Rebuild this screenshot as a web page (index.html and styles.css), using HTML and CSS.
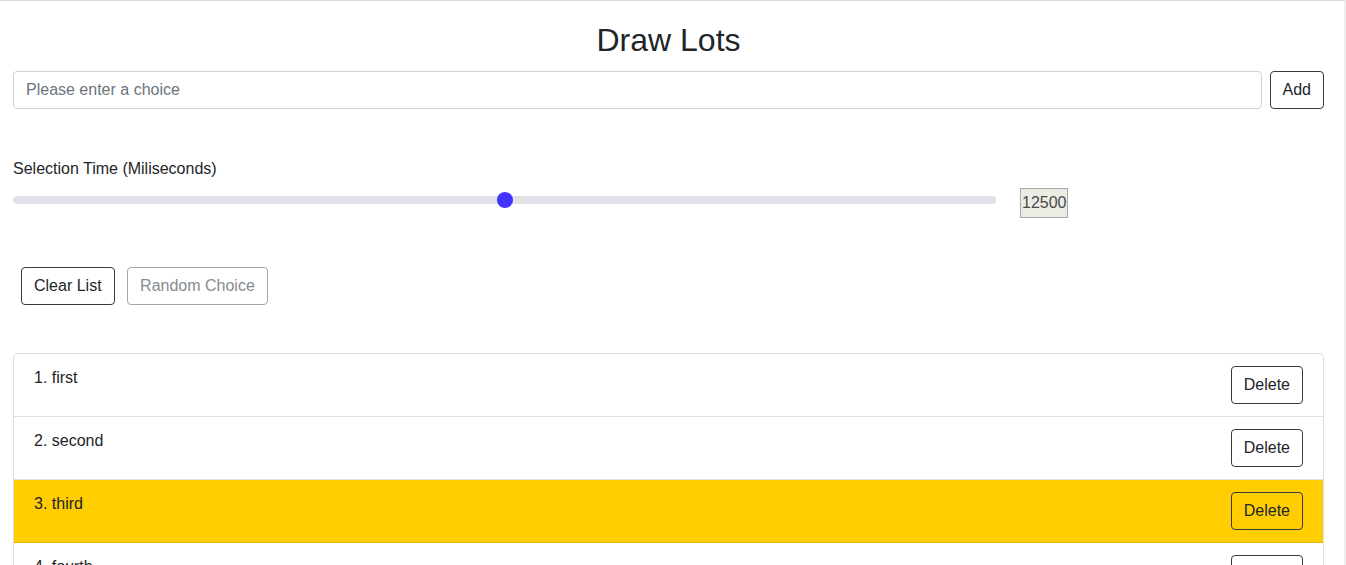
FILE: index.html
```html
<!DOCTYPE html>
<html lang="en">
<head>
<meta charset="utf-8">
<title>Draw Lots</title>
<link rel="stylesheet" href="styles.css">
</head>
<body>
<div class="frame">
  <main class="app">
    <h1 class="title">Draw Lots</h1>
    <div class="add-row">
      <input class="choice-input" type="text" placeholder="Please enter a choice">
      <button class="btn">Add</button>
    </div>

    <label class="time-label">Selection Time (Miliseconds)</label>
    <div class="slider-row">
      <input class="range" type="range" min="0" max="25000" value="12500">
      <span class="range-value">12500</span>
    </div>

    <div class="actions">
      <button class="btn">Clear List</button>
      <button class="btn btn-disabled" disabled>Random Choice</button>
    </div>

    <ul class="list">
      <li class="item"><span class="item-text">1. first</span><button class="btn">Delete</button></li>
      <li class="item"><span class="item-text">2. second</span><button class="btn">Delete</button></li>
      <li class="item item-selected"><span class="item-text">3. third</span><button class="btn">Delete</button></li>
      <li class="item"><span class="item-text">4. fourth</span><button class="btn">Delete</button></li>
    </ul>
  </main>
</div>
</body>
</html>
```

FILE: styles.css
```css
html, body {
  margin: 0;
  padding: 0;
  background: #fff;
  overflow: hidden;
}

body {
  font-family: "Liberation Sans", Arial, sans-serif;
  font-size: 16px;
  line-height: 24px;
  color: #212529;
}

.frame {
  border-top: 1px solid #dcdde0;
  border-right: 2px solid #efeff0;
  height: 565px;
  box-sizing: border-box;
  overflow: hidden;
}

.app {
  padding: 0 20px 0 13px;
}

.title {
  margin: 20px 0 12px;
  font-size: 32px;
  line-height: 38px;
  font-weight: 500;
  text-align: center;
}

.add-row {
  display: flex;
  gap: 8px;
}

.choice-input {
  flex: 1;
  height: 38px;
  box-sizing: border-box;
  padding: 6px 12px;
  border: 1px solid #ced4da;
  border-radius: 4px;
  font-family: inherit;
  font-size: 16px;
  color: #212529;
}

.choice-input::placeholder {
  color: #6c757d;
}

.btn {
  height: 38px;
  box-sizing: border-box;
  padding: 6px 12px;
  border: 1px solid #343a40;
  border-radius: 4px;
  background: transparent;
  font-family: inherit;
  font-size: 16px;
  line-height: 24px;
  color: #212529;
}

.btn-disabled {
  border-color: #a3a6a9;
  color: #868b90;
  padding: 6px 12.5px;
}

.time-label {
  display: block;
  margin-top: 48px;
}

.slider-row {
  display: flex;
  align-items: flex-start;
  gap: 24px;
  margin-top: 7px;
}

.range {
  -webkit-appearance: none;
  appearance: none;
  width: 983px;
  height: 16px;
  margin: 4px 0 0;
  background: transparent;
}

.range::-webkit-slider-runnable-track {
  height: 8px;
  background: #dee2e6;
  border-radius: 4px;
}

.range::-webkit-slider-thumb {
  -webkit-appearance: none;
  width: 16px;
  height: 16px;
  margin-top: -4px;
  border-radius: 50%;
  background: #4433ff;
  border: none;
}

.range-value {
  width: 48px;
  height: 30px;
  box-sizing: border-box;
  border: 1px solid #a9a9a9;
  background: #ebede4;
  color: #4a4a4a;
  line-height: 28px;
  padding-left: 1px;
  overflow: hidden;
}

.actions {
  display: flex;
  gap: 12px;
  margin-top: 49px;
  padding-left: 8px;
}

.list {
  list-style: none;
  margin: 48px 0 0;
  padding: 0;
  border: 1px solid #dfdfdf;
  border-bottom: none;
  border-radius: 5px 5px 0 0;
}

.item {
  display: flex;
  justify-content: space-between;
  align-items: flex-start;
  padding: 12px 20px;
  border-bottom: 1px solid #dfdfdf;
}

.item-text {
  line-height: 24px;
}

.item-selected {
  background: #ffcd00;
  border-bottom-color: #e2b500;
}
```
